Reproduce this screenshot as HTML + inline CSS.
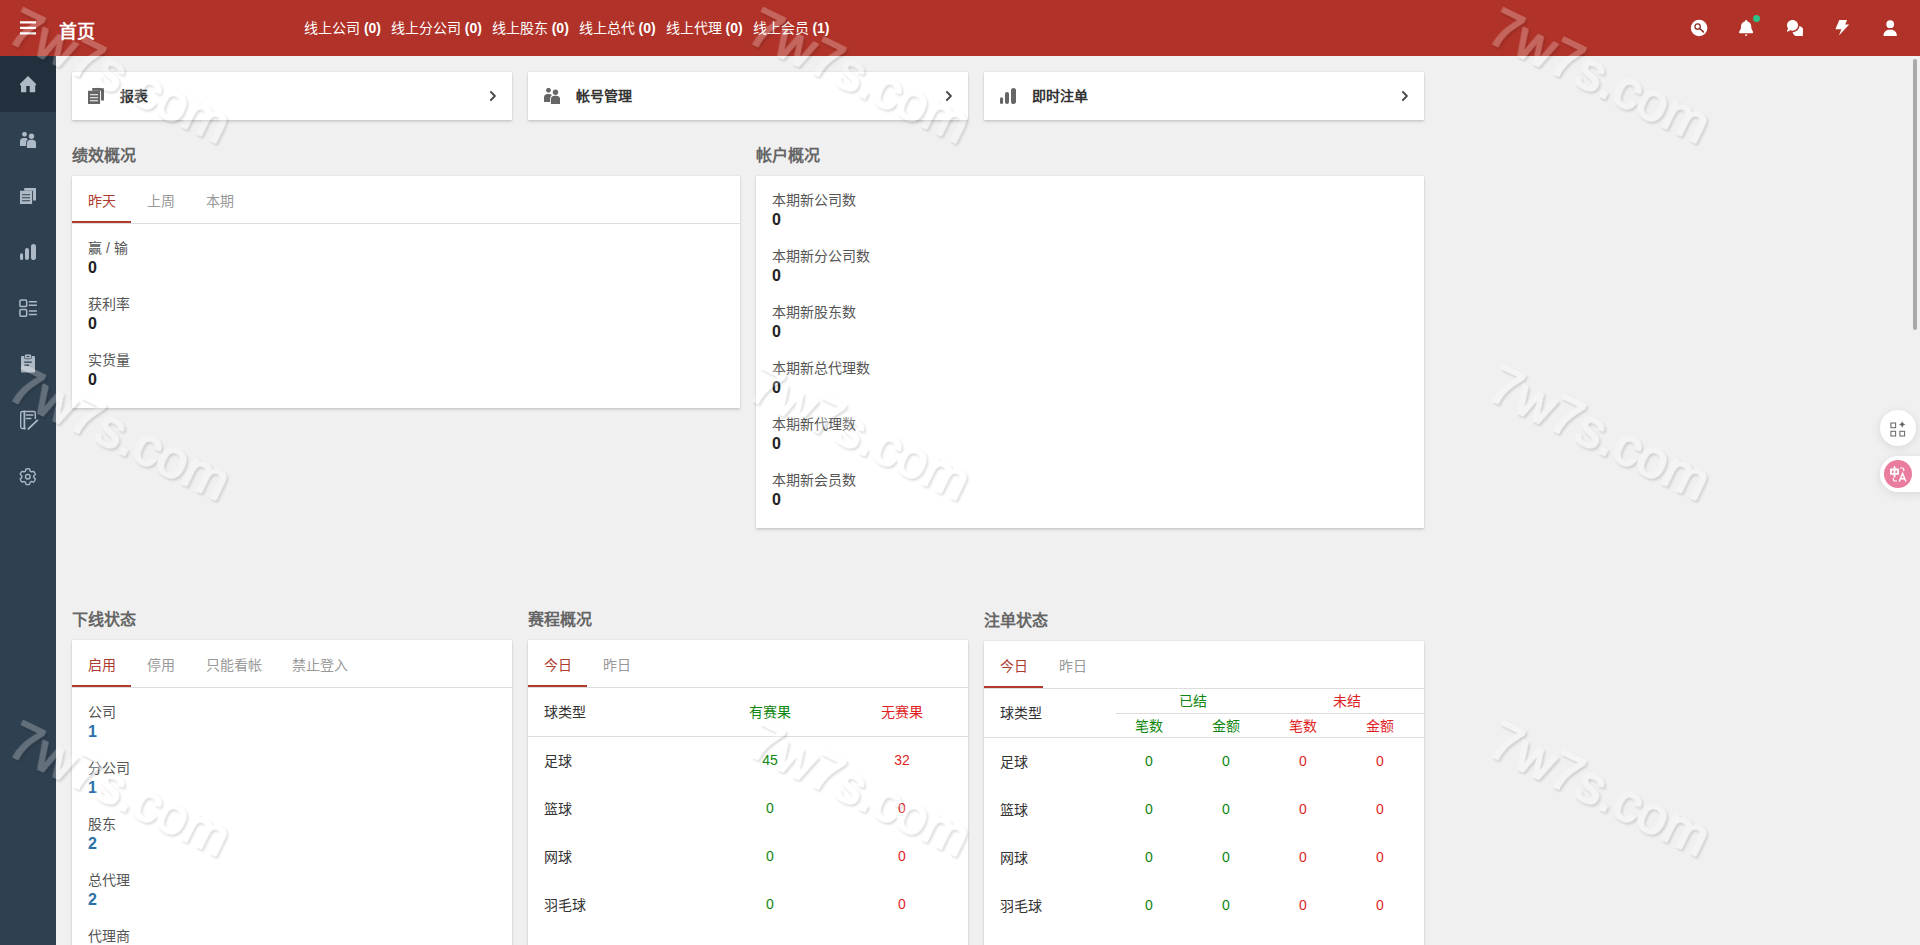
<!DOCTYPE html>
<html lang="zh-CN">
<head>
<meta charset="utf-8">
<title>首页</title>
<style>
*{box-sizing:border-box;margin:0;padding:0}
html,body{width:1920px;height:945px;overflow:hidden}
body{position:relative;background:#f0f0f0;font-family:"Liberation Sans",sans-serif;font-size:14px;color:#444}
.abs{position:absolute}
#header{position:absolute;left:0;top:0;width:1920px;height:56px;background:#b03228}
#sidebar{position:absolute;left:0;top:56px;width:56px;height:889px;background:#2f4050}
#sidebar .active{position:absolute;left:0;top:0;width:56px;height:56px;background:#22303d}
#sidebar svg{position:absolute;fill:#adb9c5}
#header svg{position:absolute;fill:#fff}
#title{position:absolute;left:59px;top:19px;height:26px;line-height:26px;font-size:18px;font-weight:bold;color:#fff;white-space:nowrap}
#online{position:absolute;left:304px;top:18px;height:20px;line-height:20px;font-size:14px;color:#fff;white-space:nowrap}
#online span{margin-right:6px}
.card{position:absolute;background:#fff;border-radius:1px;box-shadow:0 2px 3px rgba(0,0,0,.13),0 0 2px rgba(0,0,0,.13)}
.link{height:48px;width:440px;top:72px}
.link svg{position:absolute;fill:#666}
.link .t{position:absolute;left:48px;top:14px;height:20px;line-height:20px;font-size:14px;font-weight:bold;color:#333;white-space:nowrap}
.h{position:absolute;height:22px;line-height:22px;font-size:16px;font-weight:bold;color:#666;white-space:nowrap}
.tabs{position:absolute;left:0;top:0;right:0;height:48px;border-bottom:1px solid #ddd}
.tab{position:absolute;top:0;height:48px;line-height:50px;font-size:14px;color:#999;white-space:nowrap;padding:0 16px}
.tab.on{color:#ad3a2e;width:59px}
.tab.on:after{content:"";position:absolute;left:0;right:0;top:45px;height:2px;background:#b2392c}
.it{position:absolute;left:16px;white-space:nowrap}
.it .l{display:block;height:18px;line-height:18px;font-size:14px;color:#555}
.it .v{display:block;height:19px;line-height:19px;font-size:16px;font-weight:bold;color:#222}
.it .v.b{color:#2c70aa}
#c2 .v,#c3 .v{position:relative;top:1px}
#c1 .l{position:relative;top:-1px}
.c{position:absolute;white-space:nowrap;height:20px;line-height:20px;font-size:14px;color:#333}
.c.m{transform:translateX(-50%)}
.g{color:#0f860f}
.r{color:#e01f1f}
.hl{position:absolute;height:1px;background:#ddd}
.wm{position:absolute;width:10px;height:10px;overflow:visible;pointer-events:none}
.wm text{font-family:"Liberation Sans",sans-serif;font-size:52.8px;fill:#fff;stroke:#fff;stroke-width:2.2px;stroke-linejoin:round}
</style>
</head>
<body>
<div id="sidebar">
  <div class="active"></div>
<svg style="left:16px;top:16px;width:24px;height:24px" viewBox="0 0 24 24"><path d="M12 4L20.1 12V13.2H19.2V20.2H13.7V14H10.3V20.2H5V13.2H3.9V12Z"/></svg>
<svg style="left:20px;top:76px;width:16px;height:16px" viewBox="0 0 16 16"><circle cx="4.5" cy="2.3" r="2.4"/><path d="M0 14V9.6Q0 6 3.6 6H5.2Q7.2 6 7.8 7.2Q6.1 8.4 6.1 10.6V14Z"/><circle cx="11.5" cy="4.3" r="2.7"/><path d="M6.9 16V11.4Q6.9 7.7 10.6 7.7H12.4Q16.1 7.7 16.1 11.4V16Z"/></svg>
<svg style="left:20px;top:132px;width:16px;height:16px" viewBox="0 0 16 16"><path d="M4.2 0H16V12.6H13V2.8H4.2Z"/><path fill-rule="evenodd" d="M0 2.8H12.1V16H0ZM2 6.2H10V7.3H2ZM2 9.2H10V10.3H2ZM2 12.2H10V13.3H2Z"/></svg>
<svg style="left:20px;top:188px;width:16px;height:16px" viewBox="0 0 16 16"><rect x="0" y="9.2" width="3.1" height="6.8" rx="1.55"/><rect x="5" y="4" width="4" height="12" rx="2"/><rect x="11" y="0" width="5.1" height="16" rx="2.55"/></svg>
<svg style="left:16px;top:240px;width:24px;height:24px" viewBox="0 0 24 24"><g fill="none" stroke="#adb9c5" stroke-width="1.5"><rect x="3.9" y="4" width="6.8" height="6.6" rx="1.2"/><rect x="3.9" y="13.6" width="6.8" height="6.6" rx="1.2"/><path d="M12.9 5.7H20.9M12.9 9.2H20.9M12.9 15.1H20.9M12.9 18.6H20.9"/></g></svg>
<svg style="left:16px;top:296px;width:24px;height:24px" viewBox="0 0 24 24"><path fill-rule="evenodd" d="M6.2 4H8.1V5.4Q8.1 7.2 9.9 7.2H14Q15.8 7.2 15.8 5.4V4H17.8Q19 4 19 5.2V19.2Q19 20.4 17.8 20.4H6.2Q5 20.4 5 19.2V5.2Q5 4 6.2 4ZM8.2 9.4H15.8V10.7H8.2ZM8.2 12.6H12.9V13.9H8.2Z"/><path fill-rule="evenodd" d="M10 2.4H14Q15.2 2.4 15.2 3.6V5.4Q15.2 6.6 14 6.6H10Q8.8 6.6 8.8 5.4V3.6Q8.8 2.4 10 2.4ZM10.6 4H13.4V5H10.6Z"/></svg>
<svg style="left:16px;top:352px;width:24px;height:24px" viewBox="0 0 24 24"><g fill="none" stroke="#adb9c5" stroke-width="1.4" stroke-linecap="round" stroke-linejoin="round"><path d="M19.3 10.5V5.2Q19.3 3.5 17.6 3.5H6.4Q4.7 3.5 4.7 5.2V18.8Q4.7 20.5 6.4 20.5H9.2"/><path d="M8.4 3.5V20.5" stroke-width="1.8"/><path d="M10.4 6.9H16.9M10.4 10.4H14.8" stroke-width="1.5"/><path d="M12.3 20.9L21.3 12.4" stroke-width="1.8"/></g></svg>
<svg style="left:16px;top:408px;width:24px;height:24px" viewBox="0 0 24 24"><path d="M17.80 12.70 L17.80 12.49 L17.79 12.28 L17.77 12.07 L17.81 11.85 L18.13 11.58 L18.48 11.28 L18.84 10.95 L19.19 10.58 L19.31 10.26 L19.22 10.00 L19.12 9.74 L19.02 9.49 L18.90 9.24 L18.78 8.99 L18.64 8.75 L18.50 8.51 L18.35 8.28 L18.19 8.06 L18.03 7.84 L17.85 7.62 L17.67 7.41 L17.33 7.36 L16.84 7.48 L16.37 7.63 L15.93 7.78 L15.54 7.91 L15.33 7.85 L15.16 7.73 L14.98 7.61 L14.80 7.50 L14.62 7.40 L14.43 7.31 L14.24 7.22 L14.08 7.07 L14.00 6.66 L13.91 6.21 L13.80 5.73 L13.66 5.24 L13.44 4.97 L13.17 4.92 L12.90 4.88 L12.63 4.84 L12.35 4.82 L12.08 4.80 L11.80 4.80 L11.52 4.80 L11.25 4.82 L10.97 4.84 L10.70 4.88 L10.43 4.92 L10.16 4.97 L9.94 5.24 L9.80 5.73 L9.69 6.21 L9.60 6.66 L9.52 7.07 L9.36 7.22 L9.17 7.31 L8.98 7.40 L8.80 7.50 L8.62 7.61 L8.44 7.73 L8.27 7.85 L8.06 7.91 L7.67 7.78 L7.23 7.63 L6.76 7.48 L6.27 7.36 L5.93 7.41 L5.75 7.62 L5.57 7.84 L5.41 8.06 L5.25 8.28 L5.10 8.51 L4.96 8.75 L4.82 8.99 L4.70 9.24 L4.58 9.49 L4.48 9.74 L4.38 10.00 L4.29 10.26 L4.41 10.58 L4.76 10.95 L5.12 11.28 L5.47 11.58 L5.79 11.85 L5.83 12.07 L5.81 12.28 L5.80 12.49 L5.80 12.70 L5.80 12.91 L5.81 13.12 L5.83 13.33 L5.79 13.55 L5.47 13.82 L5.12 14.12 L4.76 14.45 L4.41 14.82 L4.29 15.14 L4.38 15.40 L4.48 15.66 L4.58 15.91 L4.70 16.16 L4.82 16.41 L4.96 16.65 L5.10 16.89 L5.25 17.12 L5.41 17.34 L5.57 17.56 L5.75 17.78 L5.93 17.99 L6.27 18.04 L6.76 17.92 L7.23 17.77 L7.67 17.62 L8.06 17.49 L8.27 17.55 L8.44 17.67 L8.62 17.79 L8.80 17.90 L8.98 18.00 L9.17 18.09 L9.36 18.18 L9.52 18.33 L9.60 18.74 L9.69 19.19 L9.80 19.67 L9.94 20.16 L10.16 20.43 L10.43 20.48 L10.70 20.52 L10.97 20.56 L11.25 20.58 L11.52 20.60 L11.80 20.60 L12.08 20.60 L12.35 20.58 L12.63 20.56 L12.90 20.52 L13.17 20.48 L13.44 20.43 L13.66 20.16 L13.80 19.67 L13.91 19.19 L14.00 18.74 L14.08 18.33 L14.24 18.18 L14.43 18.09 L14.62 18.00 L14.80 17.90 L14.98 17.79 L15.16 17.67 L15.33 17.55 L15.54 17.49 L15.93 17.62 L16.37 17.77 L16.84 17.92 L17.33 18.04 L17.67 17.99 L17.85 17.78 L18.03 17.56 L18.19 17.34 L18.35 17.12 L18.50 16.89 L18.64 16.65 L18.78 16.41 L18.90 16.16 L19.02 15.91 L19.12 15.66 L19.22 15.40 L19.31 15.14 L19.19 14.82 L18.84 14.45 L18.48 14.12 L18.13 13.82 L17.81 13.55 L17.77 13.33 L17.79 13.12 L17.80 12.91Z" fill="none" stroke="#adb9c5" stroke-width="1.4" stroke-linejoin="round"/><circle cx="11.8" cy="12.7" r="2.3" fill="none" stroke="#adb9c5" stroke-width="1.4"/></svg>
</div>
<div id="header">
  <svg style="left:20px;top:21px;width:16px;height:16px" viewBox="0 0 16 16"><path d="M0 0.3H16V2.4H0ZM0 5.8H16V7.9H0ZM0 11.3H16V13.4H0Z"/></svg>
<svg style="left:1690px;top:19px;width:18px;height:18px" viewBox="0 0 18 18"><circle cx="9.1" cy="9" r="8.3"/><circle cx="7.6" cy="7.5" r="2.7" fill="none" stroke="#8c2a20" stroke-width="1.3"/><path d="M9.6 9.5L13.4 12.9" stroke="#8c2a20" stroke-width="1.5" stroke-linecap="round"/></svg>
<svg style="left:1739px;top:19.7px;width:14.3px;height:16.4px" viewBox="0 0 448 512" preserveAspectRatio="none"><path d="M224 0c-17.7 0-32 14.3-32 32v3.2C119 50 64 114.6 64 192v21.7c0 48.1-16.4 94.8-46.4 132.4l-9.8 12.2C2.7 364.6 0 372.4 0 380.5 0 400.1 15.9 416 35.5 416h376.9c19.6 0 35.5-15.9 35.5-35.5 0-8.1-2.7-15.9-7.8-22.2l-9.8-12.2c-29.9-37.6-46.3-84.3-46.3-132.4V192c0-77.4-55-142-128-156.8V32c0-17.7-14.3-32-32-32M188 456c4 30 18 52 36 52s32-22 36-52z"/></svg>
<div style="position:absolute;left:1753px;top:15px;width:7px;height:7px;border-radius:50%;background:#2fc085"></div>
<svg style="left:1786.5px;top:19.6px;width:16.6px;height:16.5px" viewBox="0 -32 576 544" preserveAspectRatio="none"><path d="M384 144c0 97.2-86 176-192 176-26.7 0-52.1-5-75.2-14l-81.6 43.2c-9.3 4.9-20.7 3.2-28.2-4.2s-9.2-18.9-4.2-28.2l35.6-67.2C14.3 220.2 0 183.6 0 144 0 46.8 86-32 192-32s192 78.8 192 176m0 368c-94.1 0-172.4-62.1-188.8-144 120-1.5 224.3-86.9 235.8-202.7 83.3 19.2 145 88.3 145 170.7 0 39.6-14.3 76.2-38.4 105.6l35.6 67.2c4.9 9.3 3.2 20.7-4.2 28.2s-18.9 9.2-28.2 4.2L459.2 498c-23.1 9-48.5 14-75.2 14"/></svg>
<svg style="left:1835px;top:19px;width:15px;height:17px" viewBox="1835 19 15 17"><path d="M1839.3 19.9H1847.1L1845.2 24.5H1849.2L1838.9 35.5L1841.4 29.2H1835.4Z"/></svg>
<svg style="left:1883px;top:19.6px;width:14.4px;height:16.5px" viewBox="0 0 448 512" preserveAspectRatio="none"><path d="M224 248a120 120 0 1 0 0-240 120 120 0 1 0 0 240m-29.7 56C95.8 304 16 383.8 16 482.3c0 16.4 13.3 29.7 29.7 29.7h356.6c16.4 0 29.7-13.3 29.7-29.7 0-98.5-79.8-178.3-178.3-178.3z"/></svg>
  <div id="title">首页</div>
  <div id="online"><span>线上公司 <b>(0)</b></span> <span>线上分公司 <b>(0)</b></span> <span>线上股东 <b>(0)</b></span> <span>线上总代 <b>(0)</b></span> <span>线上代理 <b>(0)</b></span> <span>线上会员 <b>(1)</b></span></div>
</div>

<div class="card link" style="left:72px"><svg style="left:16px;top:16px;width:16px;height:16px" viewBox="0 0 16 16"><path d="M4.2 0H16V12.6H13V2.8H4.2Z"/><path fill-rule="evenodd" d="M0 2.8H12.1V16H0ZM2 6.2H10V7.3H2ZM2 9.2H10V10.3H2ZM2 12.2H10V13.3H2Z"/></svg><svg style="right:12px;top:16px;width:16px;height:16px" viewBox="0 0 16 16"><path d="M6.9 4L10.9 8L6.9 12" fill="none" stroke="#484848" stroke-width="1.8" stroke-linecap="round" stroke-linejoin="round"/></svg><div class="t">报表</div></div>
<div class="card link" style="left:528px"><svg style="left:16px;top:16px;width:16px;height:16px" viewBox="0 0 16 16"><circle cx="4.5" cy="2.3" r="2.4"/><path d="M0 14V9.6Q0 6 3.6 6H5.2Q7.2 6 7.8 7.2Q6.1 8.4 6.1 10.6V14Z"/><circle cx="11.5" cy="4.3" r="2.7"/><path d="M6.9 16V11.4Q6.9 7.7 10.6 7.7H12.4Q16.1 7.7 16.1 11.4V16Z"/></svg><svg style="right:12px;top:16px;width:16px;height:16px" viewBox="0 0 16 16"><path d="M6.9 4L10.9 8L6.9 12" fill="none" stroke="#484848" stroke-width="1.8" stroke-linecap="round" stroke-linejoin="round"/></svg><div class="t">帐号管理</div></div>
<div class="card link" style="left:984px"><svg style="left:16px;top:16px;width:16px;height:16px" viewBox="0 0 16 16"><rect x="0" y="9.2" width="3.1" height="6.8" rx="1.55"/><rect x="5" y="4" width="4" height="12" rx="2"/><rect x="11" y="0" width="5.1" height="16" rx="2.55"/></svg><svg style="right:12px;top:16px;width:16px;height:16px" viewBox="0 0 16 16"><path d="M6.9 4L10.9 8L6.9 12" fill="none" stroke="#484848" stroke-width="1.8" stroke-linecap="round" stroke-linejoin="round"/></svg><div class="t">即时注单</div></div>

<div class="h" style="left:72px;top:145px">绩效概况</div>
<div class="h" style="left:756px;top:145px">帐户概况</div>

<div class="card" id="c1" style="left:72px;top:176px;width:668px;height:232px">
  <div class="tabs"><div class="tab on" style="left:0">昨天</div><div class="tab" style="left:59px">上周</div><div class="tab" style="left:118px">本期</div></div>
  <div class="it" style="top:64px"><span class="l">赢 / 输</span><span class="v">0</span></div>
  <div class="it" style="top:120px"><span class="l">获利率</span><span class="v">0</span></div>
  <div class="it" style="top:176px"><span class="l">实货量</span><span class="v">0</span></div>
</div>

<div class="card" id="c2" style="left:756px;top:176px;width:668px;height:352px">
  <div class="it" style="top:15px"><span class="l">本期新公司数</span><span class="v">0</span></div>
  <div class="it" style="top:71px"><span class="l">本期新分公司数</span><span class="v">0</span></div>
  <div class="it" style="top:127px"><span class="l">本期新股东数</span><span class="v">0</span></div>
  <div class="it" style="top:183px"><span class="l">本期新总代理数</span><span class="v">0</span></div>
  <div class="it" style="top:239px"><span class="l">本期新代理数</span><span class="v">0</span></div>
  <div class="it" style="top:295px"><span class="l">本期新会员数</span><span class="v">0</span></div>
</div>

<div class="h" style="left:72px;top:609px">下线状态</div>
<div class="h" style="left:528px;top:609px">赛程概况</div>
<div class="h" style="left:984px;top:610px">注单状态</div>

<div class="card" id="c3" style="left:72px;top:640px;width:440px;height:320px">
  <div class="tabs"><div class="tab on" style="left:0">启用</div><div class="tab" style="left:59px">停用</div><div class="tab" style="left:118px">只能看帐</div><div class="tab" style="left:204px">禁止登入</div></div>
  <div class="it" style="top:63px"><span class="l">公司</span><span class="v b">1</span></div>
  <div class="it" style="top:119px"><span class="l">分公司</span><span class="v b">1</span></div>
  <div class="it" style="top:175px"><span class="l">股东</span><span class="v b">2</span></div>
  <div class="it" style="top:231px"><span class="l">总代理</span><span class="v b">2</span></div>
  <div class="it" style="top:287px"><span class="l">代理商</span><span class="v b">3</span></div>
</div>

<div class="card" id="c4" style="left:528px;top:640px;width:440px;height:320px">
  <div class="tabs"><div class="tab on" style="left:0">今日</div><div class="tab" style="left:59px">昨日</div></div>
  <div class="c" style="left:16px;top:62px">球类型</div>
  <div class="c m g" style="left:242px;top:62px">有赛果</div>
  <div class="c m r" style="left:374px;top:62px">无赛果</div>
  <div class="hl" style="left:0;right:0;top:96px"></div>
  <div class="c" style="left:16px;top:111px">足球</div><div class="c m g" style="left:242px;top:110px">45</div><div class="c m r" style="left:374px;top:110px">32</div>
  <div class="c" style="left:16px;top:159px">篮球</div><div class="c m g" style="left:242px;top:158px">0</div><div class="c m r" style="left:374px;top:158px">0</div>
  <div class="c" style="left:16px;top:207px">网球</div><div class="c m g" style="left:242px;top:206px">0</div><div class="c m r" style="left:374px;top:206px">0</div>
  <div class="c" style="left:16px;top:255px">羽毛球</div><div class="c m g" style="left:242px;top:254px">0</div><div class="c m r" style="left:374px;top:254px">0</div>
</div>

<div class="card" id="c5" style="left:984px;top:641px;width:440px;height:320px">
  <div class="tabs"><div class="tab on" style="left:0">今日</div><div class="tab" style="left:59px">昨日</div></div>
  <div class="c" style="left:16px;top:62px">球类型</div>
  <div class="c m g" style="left:209px;top:50px">已结</div>
  <div class="c m r" style="left:363px;top:50px">未结</div>
  <div class="hl" style="left:132px;right:0;top:72px"></div>
  <div class="c m g" style="left:165px;top:75px">笔数</div><div class="c m g" style="left:242px;top:75px">金额</div>
  <div class="c m r" style="left:319px;top:75px">笔数</div><div class="c m r" style="left:396px;top:75px">金额</div>
  <div class="hl" style="left:0;right:0;top:96px"></div>
  <div class="c" style="left:16px;top:111px">足球</div><div class="c m g" style="left:165px;top:110px">0</div><div class="c m g" style="left:242px;top:110px">0</div><div class="c m r" style="left:319px;top:110px">0</div><div class="c m r" style="left:396px;top:110px">0</div>
  <div class="c" style="left:16px;top:159px">篮球</div><div class="c m g" style="left:165px;top:158px">0</div><div class="c m g" style="left:242px;top:158px">0</div><div class="c m r" style="left:319px;top:158px">0</div><div class="c m r" style="left:396px;top:158px">0</div>
  <div class="c" style="left:16px;top:207px">网球</div><div class="c m g" style="left:165px;top:206px">0</div><div class="c m g" style="left:242px;top:206px">0</div><div class="c m r" style="left:319px;top:206px">0</div><div class="c m r" style="left:396px;top:206px">0</div>
  <div class="c" style="left:16px;top:255px">羽毛球</div><div class="c m g" style="left:165px;top:254px">0</div><div class="c m g" style="left:242px;top:254px">0</div><div class="c m r" style="left:319px;top:254px">0</div><div class="c m r" style="left:396px;top:254px">0</div>
</div>

<svg style="position:absolute;width:0;height:0"><defs><filter id="ws" x="-5%" y="-30%" width="110%" height="160%" color-interpolation-filters="sRGB">
<feGaussianBlur in="SourceAlpha" stdDeviation="0.85" result="b"/><feOffset in="b" dx="1.5" dy="0.6" result="o"/>
<feComposite in="o" in2="SourceAlpha" operator="out" result="sh"/>
<feFlood flood-color="#000" flood-opacity="0.15" result="f1"/><feComposite in="f1" in2="sh" operator="in" result="shc"/>
<feFlood flood-color="#fff" flood-opacity="0.25" result="f2"/><feComposite in="f2" in2="SourceAlpha" operator="in" result="tx"/>
<feMerge><feMergeNode in="shc"/><feMergeNode in="tx"/></feMerge></filter></defs></svg>
<div id="sbar" style="position:absolute;left:1913px;top:59px;width:4px;height:271px;border-radius:2px;background:#a9a9a9"></div>
<div id="fb1" style="position:absolute;left:1880px;top:410px;width:36px;height:36px;border-radius:50%;background:#fff;box-shadow:0 2px 10px rgba(0,0,0,.10)"><svg style="position:absolute;left:8px;top:8px;width:20px;height:20px" viewBox="0 0 20 20"><g fill="none" stroke="#707070" stroke-width="1.1"><rect x="2.9" y="5" width="4.7" height="4.7"/><rect x="2.9" y="13.3" width="4.7" height="4.7"/><rect x="11.9" y="13.3" width="4.7" height="4.7"/></g><path d="M14.2 2.8Q14.6 6 17.8 6.4Q14.6 6.8 14.2 10Q13.8 6.8 10.6 6.4Q13.8 6 14.2 2.8Z" fill="#666"/></svg></div>
<div id="fb2" style="position:absolute;left:1880px;top:456px;width:44px;height:36px;border-radius:18px 0 0 18px;background:#fff;box-shadow:0 2px 10px rgba(0,0,0,.10)"><div style="position:absolute;left:4px;top:4px;width:28px;height:28px;border-radius:50%;background:#ea7c9d"></div><svg style="position:absolute;left:4px;top:4px;width:28px;height:28px" viewBox="0 0 28 28"><g fill="none" stroke="#fff" stroke-width="1.5" stroke-linecap="round"><path d="M7 9.5H14V13.8H7ZM10.5 7V16.5" stroke-width="1.8"/><path d="M15.5 21L18.6 13.4L21.7 21M16.5 18.7H20.7"/><path d="M16.5 8H18.2Q19.8 8 19.8 9.6V10.6" stroke-width="1.2"/><path d="M12.5 21H11Q9.4 21 9.4 19.4V18.4" stroke-width="1.2"/></g></svg></div>
<svg class="wm" style="left:4.9px;top:40.3px"><text transform="rotate(26)" filter="url(#ws)">7w7s.com</text></svg>
<svg class="wm" style="left:744.9px;top:40.3px"><text transform="rotate(26)" filter="url(#ws)">7w7s.com</text></svg>
<svg class="wm" style="left:1484.9px;top:40.3px"><text transform="rotate(26)" filter="url(#ws)">7w7s.com</text></svg>
<svg class="wm" style="left:4.9px;top:396.8px"><text transform="rotate(26)" filter="url(#ws)">7w7s.com</text></svg>
<svg class="wm" style="left:744.9px;top:396.8px"><text transform="rotate(26)" filter="url(#ws)">7w7s.com</text></svg>
<svg class="wm" style="left:1484.9px;top:396.8px"><text transform="rotate(26)" filter="url(#ws)">7w7s.com</text></svg>
<svg class="wm" style="left:4.9px;top:752.8px"><text transform="rotate(26)" filter="url(#ws)">7w7s.com</text></svg>
<svg class="wm" style="left:744.9px;top:752.8px"><text transform="rotate(26)" filter="url(#ws)">7w7s.com</text></svg>
<svg class="wm" style="left:1484.9px;top:752.8px"><text transform="rotate(26)" filter="url(#ws)">7w7s.com</text></svg>
</body>
</html>
